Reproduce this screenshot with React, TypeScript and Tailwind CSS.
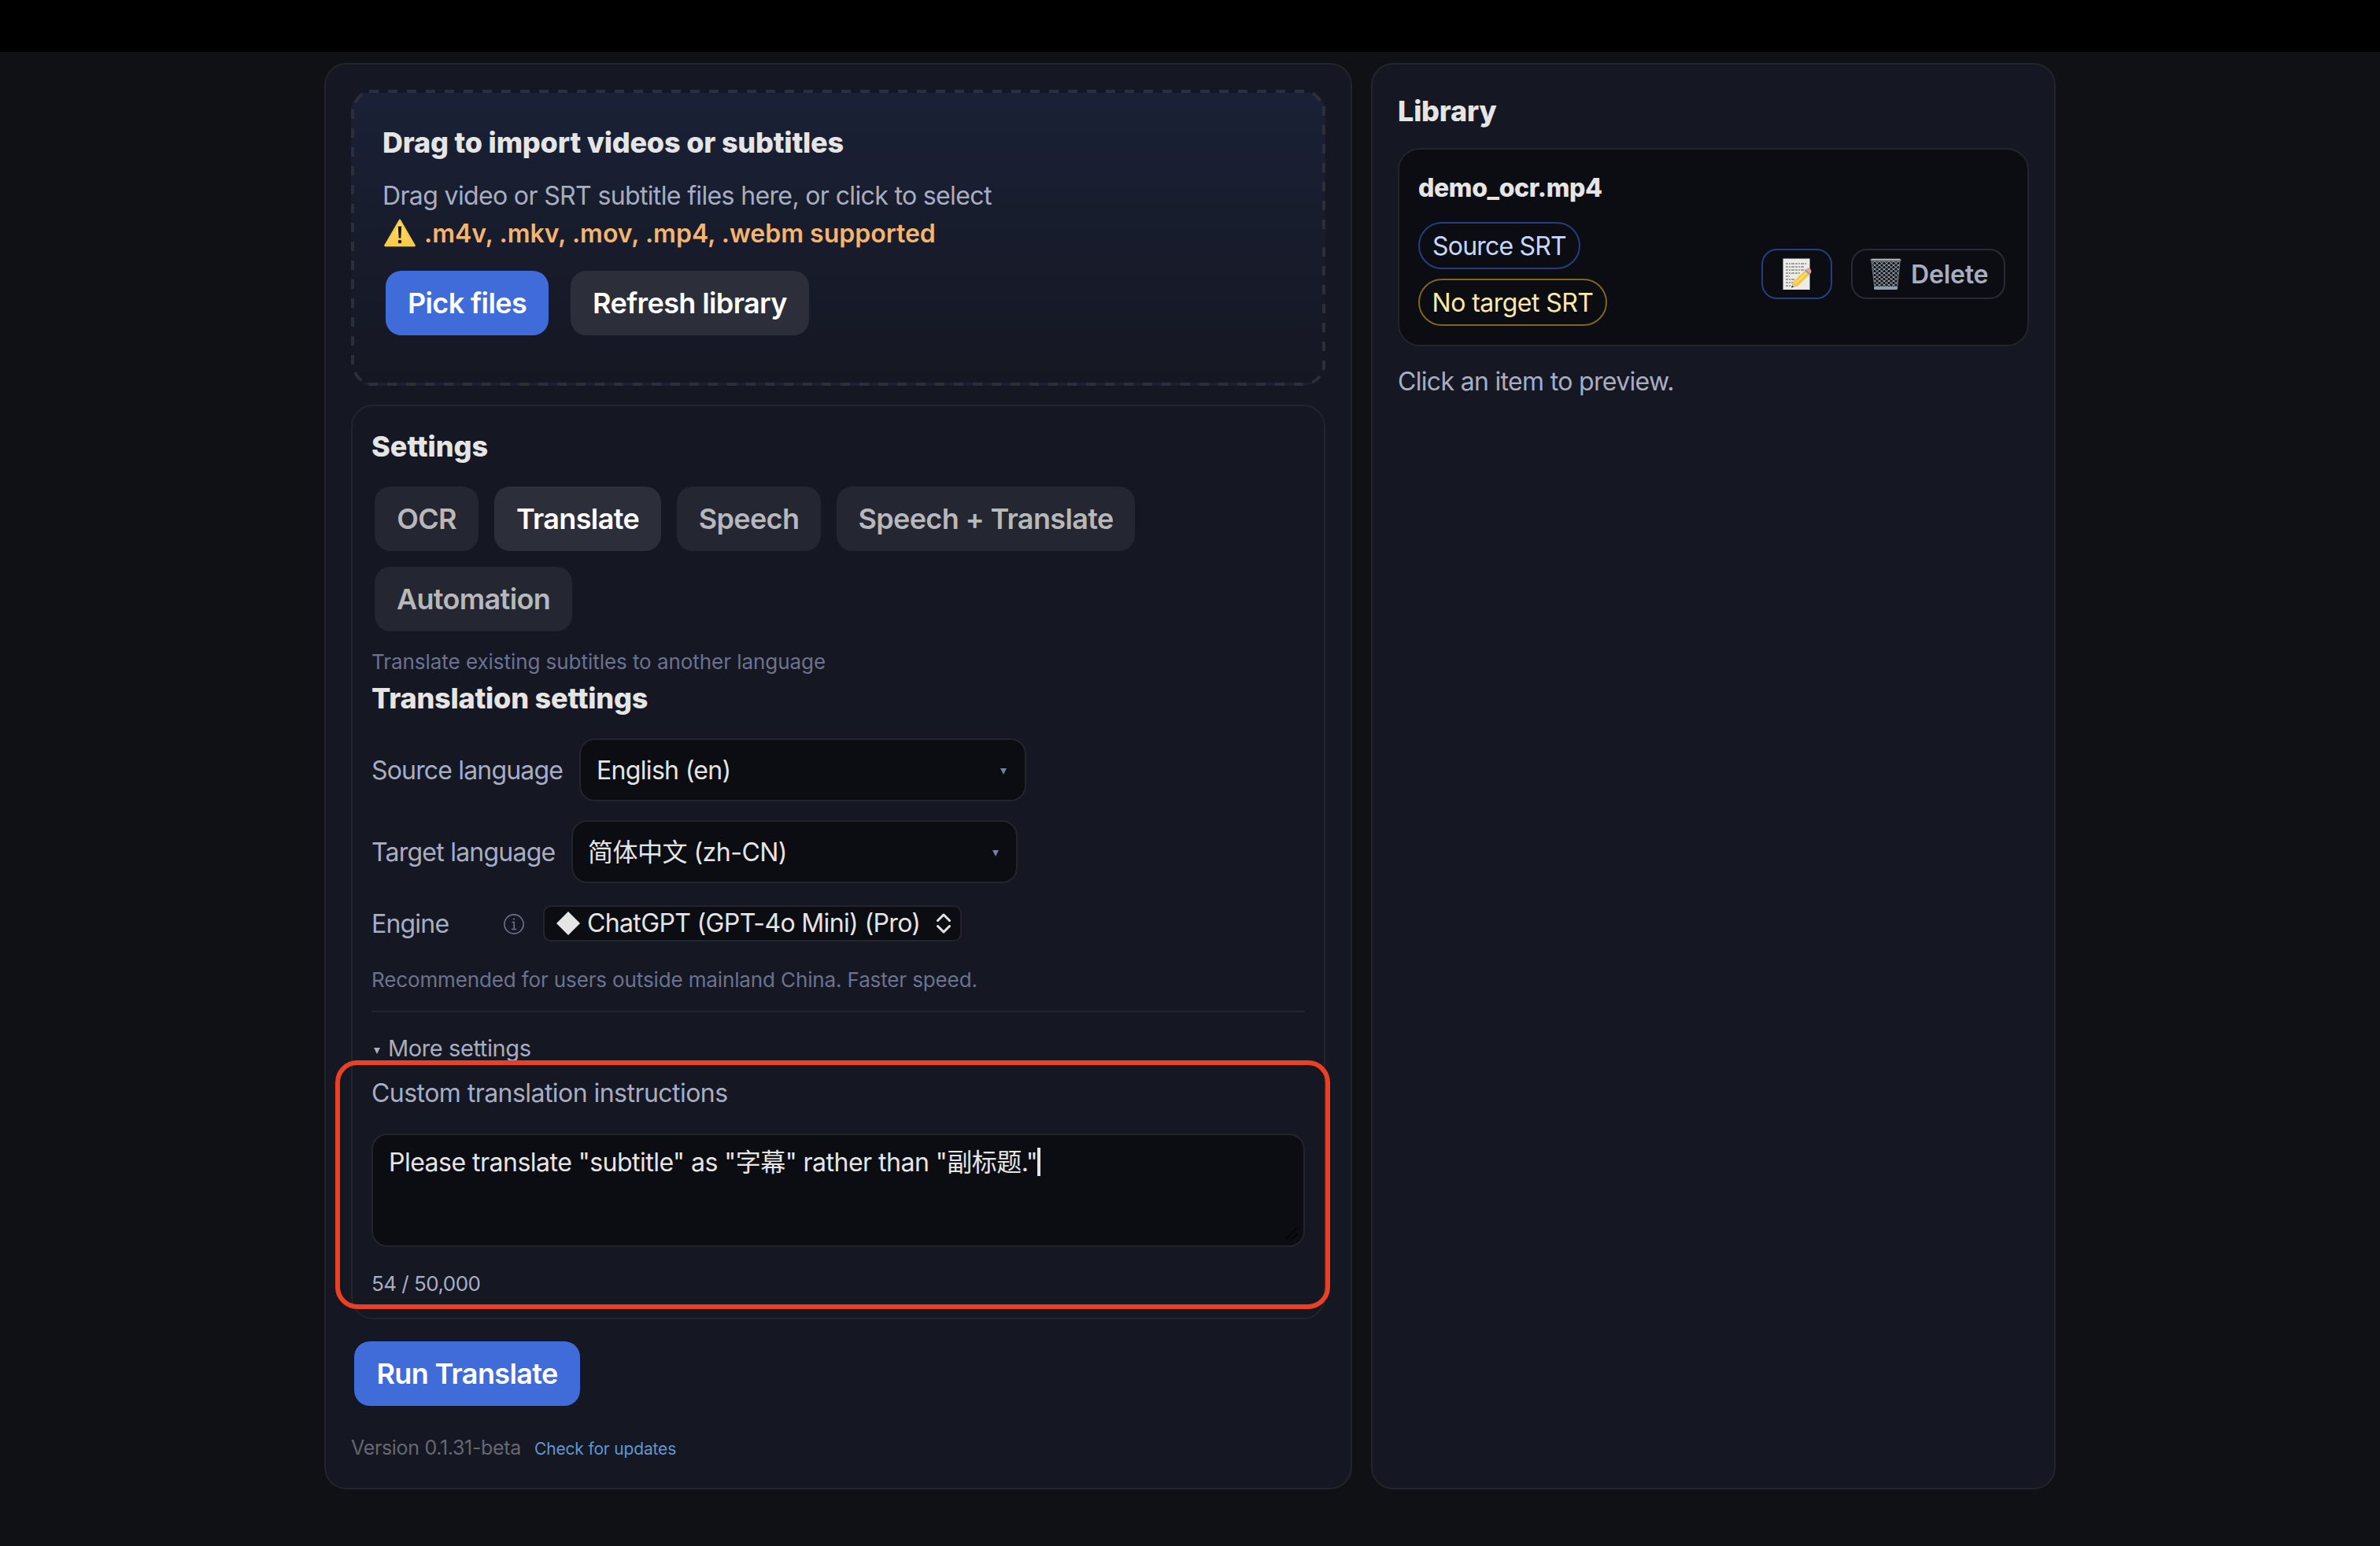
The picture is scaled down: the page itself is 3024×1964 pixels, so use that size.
import React from 'react';
import clsx from 'clsx';

const tabs = [
  { label: 'OCR', width: 'w-[132px]' },
  { label: 'Translate', width: 'w-[212px]' },
  { label: 'Speech', width: 'w-[183px]' },
  { label: 'Speech + Translate', width: 'w-[379px]' },
  { label: 'Automation', width: 'w-[251px]' },
];

function DashedOutline() {
  return (
    <svg className="absolute -top-1 -left-1 w-[1238px] h-[376px] pointer-events-none" viewBox="0 0 1238 376" fill="none" stroke="#2c2e39" strokeWidth="4">
      <path d="M23 2H1211M22 374H1210" strokeDasharray="12 12" />
      <path d="M2 25V349M1236 21V177M1236 200V356" strokeDasharray="12 12" />
      <path d="M5.5 16.5Q8.5 10 14 5.5M1222 4.5Q1228 8.5 1231.5 14M1231 364Q1227 369 1221 372M5 359Q8 365.5 13.5 369.5" />
    </svg>
  );
}

function WarningIcon() {
  return (
    <svg className="w-10 h-[36px] mt-[5px] ml-[2px]" viewBox="0 0 40 36">
      <defs>
        <linearGradient id="warn" x1="0" y1="0" x2="0" y2="1">
          <stop offset="0" stopColor="#fde272" />
          <stop offset="1" stopColor="#f7c948" />
        </linearGradient>
      </defs>
      <path d="M20 1.8L38.5 34H1.5Z" fill="url(#warn)" stroke="#f6cc50" strokeWidth="2.6" strokeLinejoin="round" />
      <path d="M17.8 9.5h4.4l-0.9 15h-2.6Z" fill="#1c1607" />
      <circle cx="20" cy="29" r="2.3" fill="#1c1607" />
    </svg>
  );
}

function MemoIcon() {
  return (
    <svg className="w-[38px] h-[42px]" viewBox="0 0 38 42">
      <rect x="1.5" y="1.5" width="34" height="39.5" fill="#ecebe8" />
      <g stroke="#55565a" strokeWidth="1" strokeDasharray="3 1 2 1 4 1" fill="none">
        <path d="M5 8h26M5 12h24M5 16h25M5 20h19M5 24h5M5 28h11M5 32h10M5 36h6" />
      </g>
      <path d="M12 38.5l2.5-7.5L29 17l5.5 5.5L20 36.5Z" fill="#f6c63c" />
      <path d="M16.5 33.5L31.5 19.5" stroke="#fbdf79" strokeWidth="2" />
      <path d="M12 38.5l2.5-7.5 5.5 5.5Z" fill="#e8c391" />
      <path d="M12 38.5l1-3 2 2Z" fill="#2a2a2a" />
      <path d="M29 17l2-2 5.5 5.5-2 2Z" fill="#9aa0a8" />
      <path d="M31 15q2.5-3 5-0.5t0.5 6Z" fill="#f09a9c" />
    </svg>
  );
}

function TrashIcon() {
  return (
    <svg className="w-10 h-[42px]" viewBox="0 0 40 42">
      <defs>
        <pattern id="mesh" width="6" height="5" patternUnits="userSpaceOnUse">
          <path d="M0 0L6 5M6 0L0 5" stroke="#a3abb6" strokeWidth="1" />
        </pattern>
      </defs>
      <path d="M2 5H38L34.5 38.5H6Z" fill="#14171c" />
      <path d="M2 5H38L34.5 38.5H6Z" fill="url(#mesh)" stroke="#6b7078" strokeWidth="1.2" />
      <rect x="0.5" y="1.5" width="39" height="3.5" rx="1.7" fill="#77797d" />
      <path d="M2 2.6H38" stroke="#c6c9ce" strokeWidth="1" />
      <rect x="5" y="37" width="30" height="4" rx="1.5" fill="#8e9cb0" />
    </svg>
  );
}

function Caret({ className }: { className?: string }) {
  return (
    <svg className={clsx('w-2 h-2', className)} viewBox="0 0 8 8" fill="currentColor">
      <path d="M0 0H8L4 8Z" />
    </svg>
  );
}

export default function App() {
  const active = 'Translate';

  return (
    <div className="w-[3024px] h-[1964px] overflow-hidden bg-[#101115] font-['Inter','Noto_Sans_CJK_SC',sans-serif] text-[#e5e5e5]">
      <div className="h-[66px] bg-black" />

      <main className="flex gap-6 w-[2200px] ml-[412px] mt-[14px]">
        {/* Workspace */}
        <section className="w-[1306px] h-[1812px] shrink-0 rounded-[28px] border-2 border-[#23252d] bg-[#151722] p-8">
          <div className="relative h-[376px] rounded-[28px] border-4 border-transparent bg-linear-to-b from-[#1a2136] to-[#151722] px-9 pt-[41px]">
            <DashedOutline />
            <h2 className="text-[36px] leading-[44px] font-extrabold tracking-[-0.005em] whitespace-nowrap">Drag to import videos or subtitles</h2>
            <p className="mt-[22px] text-[32px] leading-[48px] tracking-[-0.02em] text-[#a8aec2]">Drag video or SRT subtitle files here, or click to select</p>
            <div className="flex gap-[11px] text-[32px] leading-[48px] font-semibold text-[#f5b56e]">
              <WarningIcon />
              <span>.m4v, .mkv, .mov, .mp4, .webm supported</span>
            </div>
            <div className="flex gap-7 ml-1 mt-[23px] text-[36px] font-semibold tracking-[-0.017em] text-white">
              <button className="w-[207px] h-[82px] rounded-[20px] bg-[#406cd9]">Pick files</button>
              <button className="w-[303px] h-[82px] rounded-[20px] bg-[#2c2e39]">Refresh library</button>
            </div>
          </div>

          <div className="relative mt-6 h-[1162px] rounded-[28px] border-2 border-[#23252d] px-6 pt-[29px]">
            <h2 className="text-[36px] leading-[44px] font-extrabold">Settings</h2>
            <div className="flex flex-wrap gap-5 ml-1 mt-[29px] text-[36px] font-semibold tracking-[-0.018em]">
              {tabs.map(t => (
                <button
                  key={t.label}
                  className={clsx('h-[82px] rounded-[20px] whitespace-nowrap', t.width, t.label === active ? 'bg-[#2c2e39] text-white' : 'bg-[#242631] text-[#b7b8bc]')}
                >
                  {t.label}
                </button>
              ))}
            </div>
            <p className="mt-[23px] text-[26px] leading-8 tracking-[-0.002em] text-[#6b7390]">Translate existing subtitles to another language</p>
            <h2 className="mt-2 text-[36px] leading-[44px] font-extrabold tracking-[-0.005em]">Translation settings</h2>

            <div className="flex items-center mt-[29px] text-[32px]">
              <label className="w-[264px] pt-[2px] whitespace-nowrap tracking-[-0.026em] text-[#a8aec2]">Source language</label>
              <div className="flex items-center justify-between w-[568px] h-20 rounded-[20px] border-2 border-[#23252d] bg-[#0c0d12] pl-5 pr-[23px]">
                <span className="pt-[2px] tracking-[-0.021em]">English (en)</span>
                <Caret className="mt-1 text-[#7680a0]" />
              </div>
            </div>
            <div className="flex items-center mt-6 text-[32px]">
              <label className="w-[254px] pt-[2px] whitespace-nowrap tracking-[-0.024em] text-[#a8aec2]">Target language</label>
              <div className="flex items-center justify-between w-[567px] h-20 rounded-[20px] border-2 border-[#23252d] bg-[#0c0d12] pl-[19px] pr-[22px]">
                <span className="pt-[2px] tracking-[-0.016em]">简体中文 (zh-CN)</span>
                <Caret className="mt-1 text-[#7680a0]" />
              </div>
            </div>
            <div className="flex items-center mt-7 h-[46px] text-[32px]">
              <label className="w-[168px] pt-[2px] tracking-[-0.025em] text-[#a8aec2]">Engine</label>
              <svg className="w-[26px] h-[26px] mt-[2px] mr-6" viewBox="0 0 26 26" fill="none" stroke="#6b7390" strokeWidth="1.6">
                <circle cx="13" cy="13" r="12.1" />
                <path d="M10.5 10.5H13.2V19.5M10 19.5H16.3" />
                <circle cx="13" cy="6.6" r="1.1" fill="#6b7390" stroke="none" />
              </svg>
              <div className="flex items-center w-[532px] h-[46px] rounded-[10px] border-2 border-[#23252d] bg-[#0c0d12] pl-[15px]">
                <svg className="w-[30px] h-[30px]" viewBox="0 0 30 30" fill="#e5e5e5">
                  <path d="M15 0L30 15L15 30L0 15Z" />
                </svg>
                <span className="ml-[9px] whitespace-nowrap tracking-[-0.02em]">ChatGPT (GPT-4o Mini) (Pro)</span>
                <svg className="w-[20px] h-[26px] ml-auto mr-[11px]" viewBox="0 0 20 26" fill="none" stroke="#e5e5e5" strokeWidth="3" strokeLinecap="round" strokeLinejoin="round">
                  <path d="M2.5 9.5L10 2L17.5 9.5M2.5 16.5L10 24L17.5 16.5" />
                </svg>
              </div>
            </div>
            <p className="mt-[33px] text-[26px] leading-8 tracking-[-0.005em] text-[#6b7390]">Recommended for users outside mainland China. Faster speed.</p>

            <div className="mt-[23px] h-[2px] bg-[#23252d]" />
            <div className="flex items-center mt-7 text-[29px] leading-9 text-[#a8aec2]">
              <Caret className="ml-[3px] mr-[10px] mt-[5px]" />
              <span className="tracking-[-0.014em]">More settings</span>
            </div>
            <p className="mt-[19px] text-[32px] leading-10 tracking-[-0.017em] text-[#a8aec2]">Custom translation instructions</p>
            <div className="relative flex items-start mt-[31px] h-36 rounded-[20px] border-2 border-[#23252d] bg-[#0c0d12] pl-5 pt-[15px] text-[32px] leading-10">
              <span className="whitespace-nowrap tracking-[-0.016em]">Please translate "subtitle" as "字幕" rather than "副标题."</span>
              <span className="w-1 h-9 mt-px bg-[#e5e5e5]" />
              <svg className="absolute right-[7px] bottom-[7px] w-4 h-4" viewBox="0 0 16 16" stroke="#020203" strokeWidth="1.5">
                <path d="M0.5 15.5L15.5 0.5M8 15.5L15.5 8" />
              </svg>
            </div>
            <p className="mt-[31px] text-[26px] leading-8 tracking-[-0.02em] text-[#a8aec2]">54 / 50,000</p>

            {/* Highlight */}
            <div className="absolute -left-[22px] top-[831px] w-[1264px] h-[316px] rounded-[28px] border-6 border-[#eb4024]" />
          </div>

          <button className="block w-[287px] h-[82px] ml-1 mt-7 rounded-[20px] bg-[#406cd9] text-[36px] font-semibold tracking-[-0.018em] text-white">Run Translate</button>
          <div className="flex items-baseline mt-[37px] leading-8">
            <span className="w-[233px] whitespace-nowrap text-[25px] tracking-[-0.013em] text-[#656871]">Version 0.1.31-beta</span>
            <a className="whitespace-nowrap text-[21px] tracking-[-0.008em] text-[#5f98d3]">Check for updates</a>
          </div>
        </section>

        {/* Library */}
        <section className="w-[870px] h-[1812px] shrink-0 rounded-[28px] border-2 border-[#23252d] bg-[#151722] px-8 pt-[37px]">
          <h2 className="text-[36px] leading-[44px] font-extrabold tracking-[-0.006em]">Library</h2>
          <div className="flex items-center w-[802px] h-[252px] mt-[25px] rounded-[28px] border-2 border-[#23252d] bg-[#0c0d12] pl-6 pr-7">
            <div className="flex flex-col items-start pt-[5px]">
              <h3 className="text-[32px] leading-10 font-extrabold tracking-[-0.012em]">demo_ocr.mp4</h3>
              <span className="flex items-center justify-center mt-[23px] w-[206px] h-[60px] pt-[2px] rounded-full border-2 border-[#243f7d] text-[32px] tracking-[-0.025em] text-[#c6d7fe]">Source SRT</span>
              <span className="flex items-center justify-center mt-3 w-[240px] h-[60px] pt-[2px] rounded-full border-2 border-[#7e6524] text-[32px] tracking-[-0.017em] text-[#fce9a6]">No target SRT</span>
            </div>
            <div className="flex gap-6 ml-auto mt-[68px]">
              <button className="flex items-center justify-center w-[90px] h-16 rounded-[20px] border-2 border-[#243f7d]">
                <MemoIcon />
              </button>
              <button className="flex items-center w-[196px] h-16 rounded-[20px] border-2 border-[#282a35] pl-[22px] text-[32px] font-semibold text-[#a8aec2]">
                <TrashIcon />
                <span className="ml-3 pt-[2px] tracking-[-0.005em]">Delete</span>
              </button>
            </div>
          </div>
          <p className="mt-[21px] text-[32px] leading-[48px] tracking-[-0.021em] text-[#a8aec2]">Click an item to preview.</p>
        </section>
      </main>
    </div>
  );
}
